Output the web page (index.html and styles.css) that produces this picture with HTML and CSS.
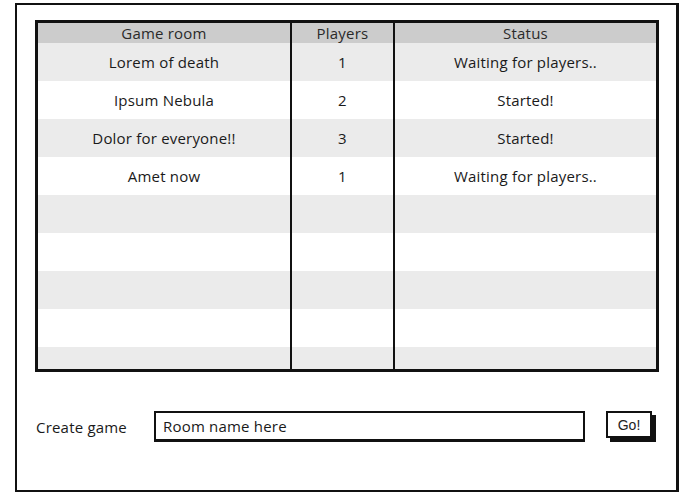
FILE: index.html
```html
<!DOCTYPE html>
<html>
<head>
<meta charset="utf-8">
<link rel="stylesheet" href="styles.css">
</head>
<body>
<div class="frame">
  <div class="table">
    <div class="row head">
      <div class="cell c1">Game room</div>
      <div class="cell c2">Players</div>
      <div class="cell c3">Status</div>
    </div>
    <div class="row odd">
      <div class="cell c1">Lorem of death</div>
      <div class="cell c2">1</div>
      <div class="cell c3">Waiting for players..</div>
    </div>
    <div class="row">
      <div class="cell c1">Ipsum Nebula</div>
      <div class="cell c2">2</div>
      <div class="cell c3">Started!</div>
    </div>
    <div class="row odd">
      <div class="cell c1">Dolor for everyone!!</div>
      <div class="cell c2">3</div>
      <div class="cell c3">Started!</div>
    </div>
    <div class="row">
      <div class="cell c1">Amet now</div>
      <div class="cell c2">1</div>
      <div class="cell c3">Waiting for players..</div>
    </div>
    <div class="row odd"><div class="cell c1"></div><div class="cell c2"></div><div class="cell c3"></div></div>
    <div class="row"><div class="cell c1"></div><div class="cell c2"></div><div class="cell c3"></div></div>
    <div class="row odd"><div class="cell c1"></div><div class="cell c2"></div><div class="cell c3"></div></div>
    <div class="row"><div class="cell c1"></div><div class="cell c2"></div><div class="cell c3"></div></div>
    <div class="row odd"><div class="cell c1"></div><div class="cell c2"></div><div class="cell c3"></div></div>
  </div>
  <div class="create">
    <span class="label">Create game</span>
    <div class="input">Room name here</div>
    <div class="go">Go!</div>
  </div>
</div>
</body>
</html>
```
FILE: styles.css
```css
html, body {
  margin: 0;
  padding: 0;
  background: #ffffff;
}
body {
  font-family: "Open Sans", "Lato", sans-serif;
  font-size: 15px;
  font-weight: 500;
  letter-spacing: 0.2px;
  color: #1a1a1a;
}
.frame {
  margin: 3px 0 0 15px;
  width: 659px;
  height: 485px;
  border: 2px solid #111;
  border-right-width: 3px;
  box-sizing: content-box;
}
.table {
  margin: 15px 0 0 18px;
  width: 618px;
  height: 346px;
  border: 3px solid #111;
  overflow: hidden;
  display: flex;
  flex-direction: column;
}
.row {
  display: flex;
  height: 38px;
  flex: none;
  background: #ffffff;
}
.row.odd {
  background: #ebebeb;
}
.row.head {
  height: 20px;
  background: #cccccc;
  color: #2a2a2a;
}
.cell {
  display: flex;
  align-items: center;
  justify-content: center;
  white-space: nowrap;
}
.c1 { width: 252px; }
.c2 { width: 101px; border-left: 2px solid #111; }
.c3 { width: 261px; border-left: 2px solid #111; }
.create {
  display: flex;
  align-items: center;
  margin: 39px 0 0 19px;
}
.label {
  width: 118px;
  flex: none;
}
.input {
  width: 420px;
  height: 26px;
  border: 2px solid #111;
  border-bottom-width: 3px;
  display: flex;
  align-items: center;
  padding-left: 7px;
  flex: none;
  box-sizing: content-box;
}
.go {
  margin-left: 21px;
  width: 42px;
  height: 23px;
  border: 2px solid #111;
  box-shadow: 4px 4px 0 #111;
  display: flex;
  align-items: center;
  justify-content: center;
  font-family: "Liberation Sans", Arial, sans-serif;
  font-size: 14px;
  font-weight: normal;
  letter-spacing: 0;
  color: #222;
  margin-top: -4px;
}
```
